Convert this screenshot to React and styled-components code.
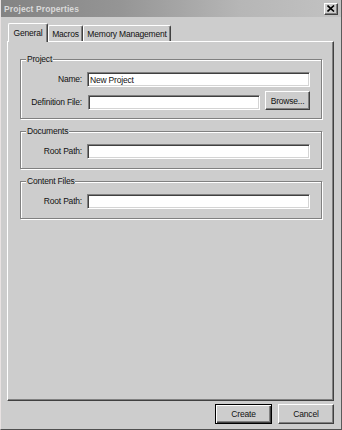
import React from 'react';
import styled, { createGlobalStyle } from 'styled-components';

const FONT = `"Liberation Sans", Arial, sans-serif`;
const BG = '#cdcdcd';

const Global = createGlobalStyle`
  html, body { margin: 0; padding: 0; background: ${BG}; }
  * { box-sizing: border-box; }
`;

const Window = styled.div`
  width: 342px;
  height: 430px;
  background: ${BG};
  border-left: 1px solid #e8e2e2;
  border-right: 1px solid #5a5a5a;
  border-bottom: 1px solid #505050;
  display: flex;
  flex-direction: column;
  font-family: ${FONT};
  font-size: 8.5px;
  letter-spacing: -0.2px;
  color: #111;
`;

const TitleBar = styled.div`
  height: 17px;
  flex: none;
  display: flex;
  align-items: center;
  justify-content: space-between;
  padding: 0 3px 0 3px;
  background: linear-gradient(to right, #838383 0%, #959595 35%, #b6b6b6 70%, #c2c2c2 100%);
`;

const Title = styled.span`
  font-weight: bold;
  color: #d9d9d9;
  font-size: 8.5px;
  letter-spacing: 0.1px;
`;

const CloseBtn = styled.div`
  width: 14px;
  height: 12px;
  background: ${BG};
  border: 1px solid;
  border-color: #fff #404040 #404040 #fff;
  box-shadow: inset -1px -1px 0 #808080;
  display: flex;
  align-items: center;
  justify-content: center;
`;

const Body = styled.div`
  flex: 1;
  display: flex;
  flex-direction: column;
  padding: 6px 7px 0 6px;
`;

const TabStrip = styled.div`
  display: flex;
  align-items: flex-end;
  height: 18px;
  padding-left: 1px;
`;

const Tab = styled.div`
  width: ${p => p.$w}px;
  height: ${p => (p.$active ? 19 : 16)}px;
  margin-bottom: ${p => (p.$active ? -1 : 0)}px;
  position: relative;
  z-index: ${p => (p.$active ? 2 : 0)};
  background: ${BG};
  border-top: 1px solid #fff;
  border-left: 1px solid #fff;
  border-right: 1px solid #404040;
  box-shadow: inset -1px 0 0 #808080;
  border-radius: 2px 2px 0 0;
  display: flex;
  align-items: center;
  justify-content: center;
  padding-bottom: ${p => (p.$active ? 1 : 0)}px;
  white-space: nowrap;
`;

const Panel = styled.div`
  height: 360px;
  flex: none;
  border-top: 1px solid #fff;
  border-left: 1px solid #fff;
  border-right: 1px solid #404040;
  border-bottom: 1px solid #404040;
  box-shadow: inset -1px -1px 0 #808080;
  padding: 17px 11px 0 12px;
  display: flex;
  flex-direction: column;
  gap: 12px;
`;

const Group = styled.div`
  position: relative;
  border: 1px solid #808080;
  box-shadow: inset 1px 1px 0 #fff, 1px 1px 0 #fff;
  padding: 12px 11px ${p => p.$pb}px 0;
  display: flex;
  flex-direction: column;
  gap: 4px;
`;

const Legend = styled.span`
  position: absolute;
  top: -7px;
  left: 5px;
  padding: 0 1px;
  background: ${BG};
  line-height: 12px;
`;

const Row = styled.div`
  display: grid;
  grid-template-columns: ${p => (p.$button ? '62px 1fr 45px' : '62px 1fr')};
  column-gap: ${p => (p.$button ? '5px' : '4px')};
  align-items: end;
`;

const Label = styled.span`
  text-align: right;
  white-space: nowrap;
  line-height: 15px;
  padding-right: 1px;
`;

const Input = styled.div`
  height: 15px;
  background: #fff;
  border: 1px solid;
  border-color: #808080 #fff #fff #808080;
  box-shadow: inset 1px 1px 0 #404040, inset -1px -1px 0 #d4d4d4;
  padding: 0 2px;
  display: flex;
  align-items: center;
  white-space: nowrap;
`;

const Button = styled.div`
  height: ${p => p.$h}px;
  width: ${p => (p.$w ? `${p.$w}px` : 'auto')};
  background: ${BG};
  border: 1px solid;
  border-color: ${p => (p.$default ? '#000' : '#fff #404040 #404040 #fff')};
  box-shadow: ${p =>
    p.$default
      ? 'inset 1px 1px 0 #fff, inset -1px -1px 0 #404040, inset -2px -2px 0 #808080'
      : 'inset -1px -1px 0 #808080'};
  display: flex;
  align-items: center;
  justify-content: center;
  white-space: nowrap;
`;

const Footer = styled.div`
  display: flex;
  justify-content: flex-end;
  gap: 6px;
  margin-top: 3px;
`;

export default function App() {
  return (
    <>
      <Global />
      <Window>
        <TitleBar>
          <Title>Project Properties</Title>
          <CloseBtn>
            <svg width="8" height="7" viewBox="0 0 8 7">
              <path d="M0.5 0.5 L7 6.5 M7 0.5 L0.5 6.5" stroke="#000" strokeWidth="1.6" />
            </svg>
          </CloseBtn>
        </TitleBar>
        <Body>
          <TabStrip>
            <Tab $w={40} $active>General</Tab>
            <Tab $w={35}>Macros</Tab>
            <Tab $w={88}>Memory Management</Tab>
          </TabStrip>
          <Panel>
            <Group $pb={8}>
              <Legend>Project</Legend>
              <Row>
                <Label>Name:</Label>
                <Input>New Project</Input>
              </Row>
              <Row $button>
                <Label>Definition File:</Label>
                <Input />
                <Button $h={19}>Browse...</Button>
              </Row>
            </Group>
            <Group $pb={9}>
              <Legend>Documents</Legend>
              <Row>
                <Label>Root Path:</Label>
                <Input />
              </Row>
            </Group>
            <Group $pb={9}>
              <Legend>Content Files</Legend>
              <Row>
                <Label>Root Path:</Label>
                <Input />
              </Row>
            </Group>
          </Panel>
          <Footer>
            <Button $h={20} $w={57} $default>Create</Button>
            <Button $h={20} $w={56}>Cancel</Button>
          </Footer>
        </Body>
      </Window>
    </>
  );
}
